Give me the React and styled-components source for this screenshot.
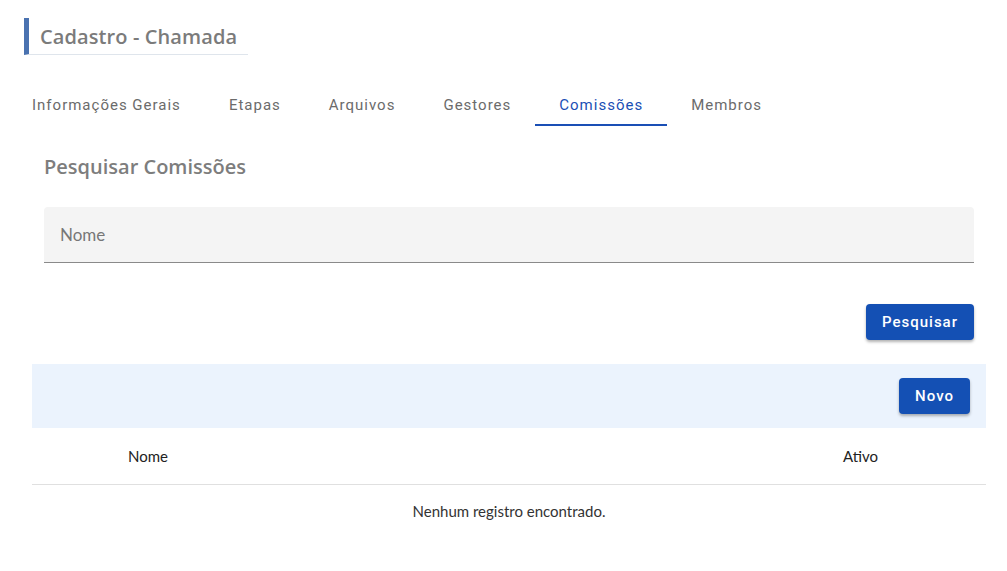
import React from 'react'
import styled, { createGlobalStyle } from 'styled-components'

const GlobalStyle = createGlobalStyle`
  body {
    margin: 0;
    background: #fff;
    font-family: Lato, "Noto Sans", sans-serif;
  }
`

const Page = styled.div`
  width: 1007px;
  min-height: 571px;
  display: flex;
  flex-direction: column;
`

const TitleWrap = styled.div`
  margin: 18px 0 0 24px;
  width: 224px;
  height: 37px;
  border-left: 5px solid #4a72b0;
  border-bottom: 1px solid #dfe5ec;
  display: flex;
  align-items: center;
  padding-left: 11px;
  box-sizing: border-box;
`

const Title = styled.h1`
  margin: 0;
  font-family: "Open Sans", sans-serif;
  font-size: 20px;
  font-weight: 600;
  color: #7b7b7b;
  letter-spacing: 0.1px;
`

const Tabs = styled.nav`
  display: flex;
  margin: 30px 0 0 8px;
`

const Tab = styled.div`
  height: 41px;
  padding: 0 24px;
  display: flex;
  align-items: center;
  font-family: Roboto, sans-serif;
  font-size: 15px;
  letter-spacing: 1px;
  color: ${({ $active }) => ($active ? '#1a4fb5' : '#6b6b6b')};
  border-bottom: 2px solid ${({ $active }) => ($active ? '#1a4fb5' : 'transparent')};
  box-sizing: border-box;
`

const Section = styled.section`
  margin: 0 33px 0 44px;
  display: flex;
  flex-direction: column;
`

const SectionTitle = styled.h2`
  margin: 27px 0 0;
  font-family: "Open Sans", sans-serif;
  font-size: 20px;
  font-weight: 600;
  color: #7d7d7d;
  height: 28px;
  line-height: 28px;
`

const Field = styled.div`
  margin-top: 26px;
  height: 56px;
  background: #f4f4f4;
  border-bottom: 1px solid #8a8a8a;
  display: flex;
  align-items: center;
  padding-left: 16px;
  box-sizing: border-box;
  border-radius: 4px 4px 0 0;
`

const Placeholder = styled.span`
  font-size: 17px;
  color: #777;
`

const Actions = styled.div`
  display: flex;
  justify-content: flex-end;
  padding: ${({ $pad }) => $pad || '0'};
  margin-top: ${({ $top }) => $top || '0'};
  background: ${({ $bg }) => $bg || 'transparent'};
`

const Button = styled.button`
  height: 36px;
  padding: 0 16px;
  border: none;
  border-radius: 4px;
  background: #1450b4;
  color: #fff;
  font-family: Roboto, sans-serif;
  font-size: 15px;
  font-weight: 500;
  letter-spacing: 1px;
  box-shadow: 0 2px 3px rgba(0, 0, 0, 0.3);
`

const TableArea = styled.div`
  margin: 24px 21px 0 32px;
  display: flex;
  flex-direction: column;
`

const HeaderRow = styled.div`
  display: grid;
  grid-template-columns: 1fr 143px;
  height: 56px;
  align-items: center;
  border-bottom: 1px solid #e0e0e0;
  font-size: 15px;
  color: #222;
`

const HeadCell = styled.div`
  padding-left: ${({ $pl }) => $pl || '0'};
`

const Empty = styled.div`
  text-align: center;
  font-size: 15px;
  color: #333;
  padding-top: 17px;
`

export default function App() {
  const tabs = ['Informações Gerais', 'Etapas', 'Arquivos', 'Gestores', 'Comissões', 'Membros']
  return (
    <Page>
      <GlobalStyle />
      <TitleWrap>
        <Title>Cadastro - Chamada</Title>
      </TitleWrap>
      <Tabs>
        {tabs.map((t) => (
          <Tab key={t} $active={t === 'Comissões'}>{t}</Tab>
        ))}
      </Tabs>
      <Section>
        <SectionTitle>Pesquisar Comissões</SectionTitle>
        <Field>
          <Placeholder>Nome</Placeholder>
        </Field>
        <Actions $top="41px">
          <Button>Pesquisar</Button>
        </Actions>
      </Section>
      <TableArea>
        <Actions $bg="#ebf3fd" $pad="14px 16px">
          <Button>Novo</Button>
        </Actions>
        <HeaderRow>
          <HeadCell $pl="96px">Nome</HeadCell>
          <HeadCell>Ativo</HeadCell>
        </HeaderRow>
        <Empty>Nenhum registro encontrado.</Empty>
      </TableArea>
    </Page>
  )
}
